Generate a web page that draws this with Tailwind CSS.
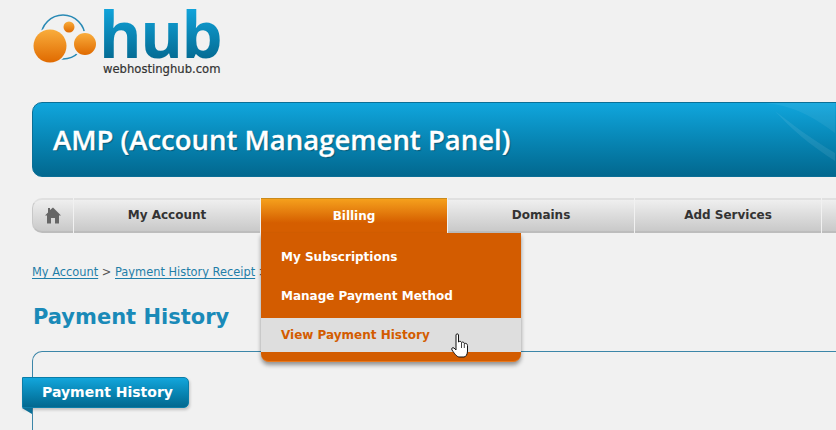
<!DOCTYPE html>
<html lang="en">
  <head>
    <meta charset="UTF-8" />
    <title>Payment History</title>
    <script src="https://cdn.jsdelivr.net/npm/@tailwindcss/browser@4"></script>
  </head>
  <body class="bg-[#f1f1f1] font-['DejaVu_Sans',sans-serif]">
    <div class="relative w-[836px] h-[430px] overflow-hidden">

      <!-- Logo -->
      <div class="h-[102px] pl-[33px] pt-[5px] flex items-start">
        <svg width="70" height="64" viewBox="33 0 70 64" class="shrink-0 mt-[-5px]">
          <defs>
            <linearGradient id="orb" x1="0" y1="0" x2="0" y2="1">
              <stop offset="0" stop-color="#f9ad3c" />
              <stop offset="1" stop-color="#e06a00" />
            </linearGradient>
          </defs>
          <circle cx="63" cy="37" r="22" fill="none" stroke="#2a8ab5" stroke-width="1.6" />
          <circle cx="69" cy="27" r="7" fill="#f1f1f1" />
          <circle cx="85" cy="44" r="13" fill="#f1f1f1" />
          <circle cx="50" cy="46" r="18" fill="#f1f1f1" />
          <circle cx="69" cy="27" r="5.5" fill="url(#orb)" />
          <circle cx="85" cy="44" r="11" fill="url(#orb)" />
          <circle cx="50" cy="46" r="16.5" fill="url(#orb)" />
        </svg>
        <div class="flex flex-col">
          <div class="ml-[-4px] font-['Open_Sans',sans-serif] font-bold text-[65px] leading-[57px] h-[57px] tracking-[-1.5px] bg-gradient-to-b from-[#12a8e0] to-[#04688f] bg-clip-text text-transparent">hub</div>
          <div class="mt-[1px] text-[11.6px] leading-[13px] text-[#333] [-webkit-text-stroke:0.2px_#333]">webhostinghub.com</div>
        </div>
      </div>

      <!-- Banner -->
      <div class="ml-[32px] w-[830px] h-[75px] rounded-[10px] border border-[#0b6f96] bg-gradient-to-b from-[#10a6dd] to-[#02688f] flex items-center pl-[20px] relative overflow-hidden">
        <svg class="absolute right-[26px] top-0" width="70" height="75" viewBox="0 0 70 75">
          <path d="M0 0 L70 0 L70 30 C50 15 30 3 0 0 Z" fill="#fff" fill-opacity="0.06" />
          <path d="M10 8 C25 25 45 42 70 58 L70 50 C45 35 28 22 10 8 Z" fill="#fff" fill-opacity="0.08" />
        </svg>
        <h1 class="font-['Open_Sans',sans-serif] font-semibold text-[27.5px] text-white [-webkit-text-stroke:0.3px_#fff] [text-shadow:1px_1px_1px_rgba(0,0,0,0.35)]">AMP (Account Management Panel)</h1>
      </div>

      <!-- Nav -->
      <nav class="mt-[21px] ml-[32px] flex h-[35px] text-[12px] font-bold text-[#333]">
        <div class="w-[41px] shrink-0 rounded-l-[10px] border-t-2 border-b-2 border-l border-t-[#e0e0e0] border-b-[#bdbdbd] border-l-[#c8c8c8] bg-gradient-to-b from-[#efefef] to-[#c9c9c9] flex items-center justify-center pb-[1px]">
          <svg width="16" height="17" viewBox="0 0 16 17"><path d="M3 1 H5 V3 L8 0.5 L16 8.5 H14 V16.5 H10 V11 H6 V16.5 H2 V8.5 H0 L3 5.5 Z" fill="#666" /></svg>
        </div>
        <div class="w-[186px] shrink-0 ml-[1px] pb-[1px] border-t-2 border-b-2 border-t-[#e0e0e0] border-b-[#bdbdbd] bg-gradient-to-b from-[#efefef] to-[#c9c9c9] flex items-center justify-center">My Account</div>
        <div class="w-[186px] shrink-0 ml-[1px] pb-[1px] border-t border-t-[#c98a1c] bg-gradient-to-b from-[#f5a01c] via-[#d55e00] via-70% to-[#d55e00] flex items-center justify-center text-white">Billing</div>
        <div class="w-[186px] shrink-0 ml-[1px] pb-[1px] border-t-2 border-b-2 border-t-[#e0e0e0] border-b-[#bdbdbd] bg-gradient-to-b from-[#efefef] to-[#c9c9c9] flex items-center justify-center">Domains</div>
        <div class="w-[186px] shrink-0 ml-[1px] pb-[1px] border-t-2 border-b-2 border-t-[#e0e0e0] border-b-[#bdbdbd] bg-gradient-to-b from-[#efefef] to-[#c9c9c9] flex items-center justify-center">Add Services</div>
        <div class="w-[186px] shrink-0 ml-[1px] border-t-2 border-b-2 border-t-[#e0e0e0] border-b-[#bdbdbd] bg-gradient-to-b from-[#efefef] to-[#c9c9c9]"></div>
      </nav>

      <!-- Breadcrumb -->
      <div class="mt-[32px] ml-[32px] text-[11.4px] leading-[14px] text-[#555] whitespace-nowrap">
        <a class="text-[#1f7ea8] underline underline-offset-2">My Account</a> &gt; <a class="text-[#1f7ea8] underline underline-offset-2">Payment History Receipt</a> &gt;
      </div>

      <h2 class="mt-[24px] ml-[33px] text-[21px] leading-[28px] font-bold text-[#1a8ab8]">Payment History</h2>

      <!-- Panel -->
      <div class="mt-[20px] ml-[32px] w-[830px] h-[120px] rounded-tl-[10px] border-t border-l border-[#3c86a8]"></div>

      <!-- Ribbon -->
      <div class="absolute left-[22px] top-[377px]">
        <div class="w-[167px] h-[31px] pl-[4px] rounded-r-[5px] border border-[#0b7da8] bg-gradient-to-b from-[#12a6dc] to-[#02688f] flex items-center justify-center text-white text-[14px] font-bold shadow-[1px_2px_3px_rgba(0,0,0,0.2)]">Payment History</div>
        <svg class="absolute left-0 top-[31px]" width="10" height="6" viewBox="0 0 10 6"><path d="M0 0 L10 0 L10 6 Z" fill="#0b6f96" /></svg>
      </div>

      <!-- Billing dropdown -->
      <div class="absolute left-[261px] top-[233px] w-[260px] h-[129px] bg-[#d35c00] rounded-b-[8px] border-b border-b-[#e87a20] shadow-[0_3px_4px_rgba(0,0,0,0.4)] text-[12px] font-bold text-white">
        <div class="h-[46px] pl-[20px] pt-[1px] flex items-center">My Subscriptions</div>
        <div class="h-[39px] pl-[20px] pb-[5px] flex items-center">Manage Payment Method</div>
        <div class="h-[34px] pl-[20px] flex items-center bg-[#dedede] text-[#d35c00]">View Payment History</div>
      </div>

      <!-- Cursor -->
      <svg class="absolute left-[451px] top-[333px]" width="20" height="25" viewBox="0 0 20 25">
        <path d="M5 2 C5 0.5 7.5 0.5 7.5 2 L7.5 9 C8.5 8 10 8 10.5 9.5 C11.5 8.7 13 9 13.3 10.5 C14.5 10 16.5 10.5 16.5 12.5 L16.5 18 C16.5 21 15 24 13 24 L8 24 C6 24 3 20 1 17 C0 15.5 1.5 14 3 15 L5 17 Z" fill="#fff" stroke="#111" stroke-width="1" />
        <path d="M10.5 10 V15 M13.3 11 V15" stroke="#111" stroke-width="0.8" fill="none" />
      </svg>
    </div>
  </body>
</html>
